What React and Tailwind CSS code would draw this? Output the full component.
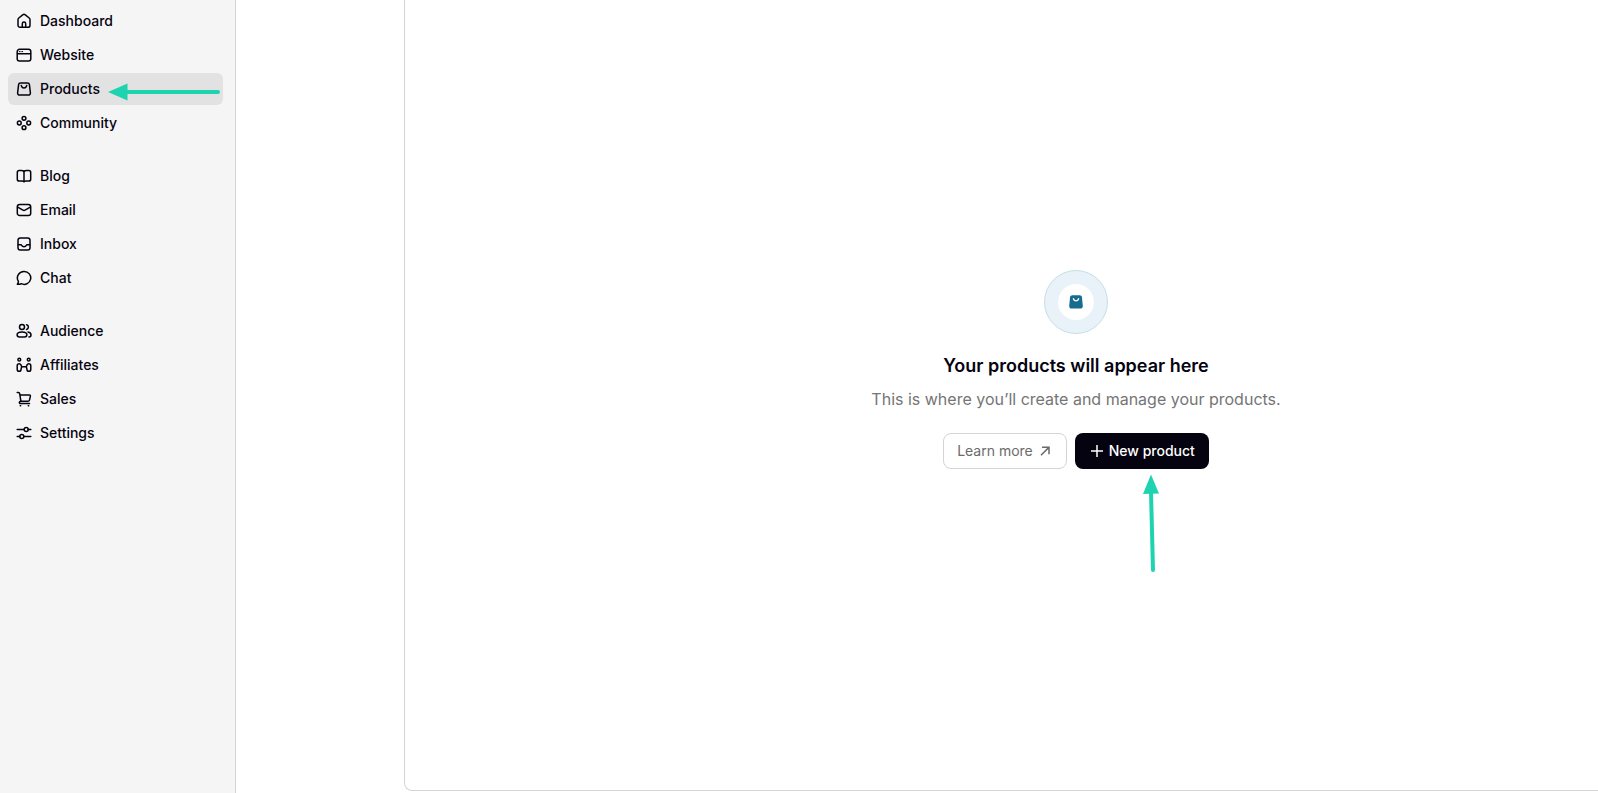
const NAV_GROUPS = [
  [
    {
      label: "Dashboard",
      icon: (
        <>
          <path d="M2 6.7c0-.7.3-1.3.8-1.700L6.700 1.800c.8-.6 1.800-.6 2.600 0L13.200 5c.5.4.8 1 .8 1.700v5.500c0 1.200-.9 2.100-2.100 2.100H4.100C2.900 14.300 2 13.400 2 12.200z" />
          <path d="M6.300 14v-3.300a1.700 1.700 0 0 1 3.400 0V14" />
        </>
      ),
    },
    {
      label: "Website",
      icon: (
        <>
          <rect x="1.2" y="2.3" width="13.6" height="11.7" rx="2.3" />
          <path d="M1.500 6.800h13" />
          <path d="M3.300 4.600h.9M5.800 4.600h.9" strokeWidth="1" />
        </>
      ),
    },
    {
      label: "Products",
      current: true,
      icon: (
        <>
          <path d="M4.500 1.900h7c1 0 1.800.7 1.900 1.700l1 8.300c.1 1.200-.8 2.200-2 2.200H3.600c-1.200 0-2.100-1-2-2.200l1-8.300c.1-1 .9-1.700 1.900-1.700z" />
          <path d="M5.300 4.600C5.700 6.200 6.700 7 8 7s2.300-.8 2.700-2.400" />
        </>
      ),
    },
    {
      label: "Community",
      icon: (
        <>
          <circle cx="8" cy="3.3" r="1.9" />
          <circle cx="8" cy="12.7" r="1.9" />
          <circle cx="3.3" cy="8" r="1.9" />
          <circle cx="12.7" cy="8" r="1.9" />
        </>
      ),
    },
  ],
  [
    {
      label: "Blog",
      icon: (
        <>
          <path d="M8 3.600C7.400 2.900 6.500 2.500 5.400 2.500H3.200c-1 0-1.900.8-1.900 1.900v6.800c0 1.100.9 1.900 1.900 1.900h3c.8 0 1.400.3 1.800.7.4-.4 1-.7 1.800-.7h3c1 0 1.900-.8 1.900-1.900V4.400c0-1.100-.9-1.900-1.900-1.900h-2.200c-1.100 0-2 .4-2.600 1.100z" />
          <path d="M8 3.600v10" />
        </>
      ),
    },
    {
      label: "Email",
      icon: (
        <>
          <rect x="1.3" y="2.5" width="13.4" height="11" rx="2.3" />
          <path d="M1.700 5.200 7 8.100c.6.4 1.400.4 2 0l5.300-2.900" />
        </>
      ),
    },
    {
      label: "Inbox",
      icon: (
        <>
          <rect x="2" y="2" width="12" height="12" rx="2.3" />
          <path d="M2.200 8.800h2.600c.5 0 .8.3 1 .7.3.8 1 1.300 2.200 1.300s1.900-.5 2.200-1.300c.2-.4.5-.7 1-.7h2.600" />
        </>
      ),
    },
    {
      label: "Chat",
      icon: <path d="M8.200 1.400a6.500 6.500 0 1 1-2.900 12.300c-1.100.5-2.500.7-4 .6.8-.8 1.200-2 1-3.100A6.500 6.500 0 0 1 8.200 1.400z" />,
    },
  ],
  [
    {
      label: "Audience",
      icon: (
        <>
          <circle cx="6" cy="4.1" r="2.500" />
          <path d="M6 8.900c2.900 0 4.900 1.300 4.900 2.900 0 1.300-1 2.100-2.400 2.100h-5c-1.400 0-2.400-.8-2.400-2.100 0-1.600 2-2.900 4.900-2.900z" />
          <path d="M10.600 1.700a2.500 2.500 0 0 1 0 4.800M12 9c1.800.4 3 1.500 3 2.900 0 1.200-.8 2-2.100 2" />
        </>
      ),
    },
    {
      label: "Affiliates",
      icon: (
        <>
          <circle cx="3.300" cy="2.700" r="1.400" />
          <circle cx="12.700" cy="2.700" r="1.400" />
          <path d="M5.700 9.700 4.900 7.900c-.3-.7-.9-1.100-1.600-1.100-1.200 0-2.100.9-2.100 2v3.400c0 1.200.8 2.100 1.900 2.100s1.900-.8 1.900-1.900z" />
          <path d="m10.300 9.700.8-1.800c.3-.7.9-1.100 1.600-1.100 1.200 0 2.100.9 2.100 2v3.400c0 1.200-.8 2.100-1.900 2.100s-1.900-.8-1.900-1.900z" />
          <path d="M5.700 9.700h4.600" />
        </>
      ),
    },
    {
      label: "Sales",
      icon: (
        <>
          <path d="M1.200 1.400h1.100c.7 0 1.300.5 1.400 1.200l1.200 7.700H12c.7 0 1.300-.5 1.500-1.200l.9-4c.1-.6-.3-1.100-.9-1.100H4" />
          <path d="M4.900 10.300c-2 0-2.100 2.300-.4 2.300h9" />
          <path d="M4.300 14.700h.4M12.300 14.700h.4" />
        </>
      ),
    },
    {
      label: "Settings",
      icon: (
        <>
          <circle cx="10.2" cy="4.6" r="2" />
          <circle cx="5.8" cy="11.4" r="2" />
          <path d="M1.200 4.600h7M12.200 4.600h2.600M1.200 11.400h2.600M7.800 11.400h7" />
        </>
      ),
    },
  ],
]

const NavIcon = ({ children }) => (
  <svg
    className="h-4 w-4 shrink-0"
    viewBox="0 0 16 16"
    fill="none"
    stroke="currentColor"
    strokeWidth="1.5"
    strokeLinecap="round"
    strokeLinejoin="round"
    aria-hidden
  >
    {children}
  </svg>
)

const Sidebar = () => (
  <nav className="flex w-[236px] shrink-0 flex-col gap-[21px] border-r border-[#d4d4d4] bg-[#f5f5f5] py-[5px] pr-3 pl-2">
    {NAV_GROUPS.map((group) => (
      <ul key={group[0].label} className="flex flex-col gap-0.5">
        {group.map(({ label, icon, current }) => (
          <li key={label} className="relative">
            <a
              href="#"
              aria-current={current ? "page" : undefined}
              className={[
                "flex h-8 items-center gap-2 rounded-md px-2 text-sm font-medium text-[#05030f]",
                current ? "bg-[#e2e2e2]" : "hover:bg-[#ebebeb]",
              ].join(" ")}
            >
              <NavIcon>{icon}</NavIcon>
              {label}
            </a>
            {/* pointer to the current section */}
            {current && (
              <svg
                className="pointer-events-none absolute top-2 right-0 h-5 w-[116px]"
                viewBox="0 0 116 20"
                aria-hidden
              >
                <path d="M1 11 20.500 2.500v17z" fill="#1dd3b0" />
                <path d="M18 11h93" stroke="#1dd3b0" strokeWidth="4" strokeLinecap="round" />
              </svg>
            )}
          </li>
        ))}
      </ul>
    ))}
  </nav>
)

const EmptyState = () => (
  <div className="flex flex-col items-center text-center">
    <div className="grid h-16 w-16 place-items-center rounded-full border border-[#c3dfe9] bg-[#e9f2f8]">
      <div className="grid h-9 w-9 place-items-center rounded-full bg-white">
        <svg className="h-4 w-4" viewBox="0 0 16 16" aria-hidden>
          <path
            d="M4.400 1.200h7.200c1.300 0 2.300.9 2.400 2.200l.8 8.500c.1 1.500-1 2.700-2.500 2.700H3.700c-1.500 0-2.600-1.200-2.500-2.700L2 3.400c.1-1.300 1.100-2.200 2.400-2.200z"
            fill="#166b8f"
          />
          <path
            d="M5.400 4.700c.4 1.400 1.300 2.100 2.600 2.100s2.200-.7 2.600-2.100"
            fill="none"
            stroke="#fff"
            strokeWidth="1.3"
            strokeLinecap="round"
          />
        </svg>
      </div>
    </div>

    <h1 className="mt-[18px] text-lg leading-7 font-semibold text-[#05030f]">
      Your products will appear here
    </h1>
    <p className="mt-[7px] text-base leading-6 text-[#757575]">
      This is where you’ll create and manage your products.
    </p>

    <div className="mt-[22px] flex gap-2">
      <a
        href="#"
        className="flex h-9 items-center gap-1 rounded-lg border border-[#d4d4d4] px-[13px] text-sm text-[#6b6b6b]"
      >
        Learn more
        <svg className="h-4 w-4" viewBox="0 0 16 16" fill="none" stroke="currentColor" strokeWidth="1.5" aria-hidden>
          <path d="m4 12.200 7.600-7.600M5 4.200h7v7" />
        </svg>
      </a>
      <div className="relative">
        <button
          type="button"
          className="flex h-9 items-center gap-1 rounded-lg bg-[#05030f] px-[14px] text-sm font-medium text-white"
        >
          <svg className="h-4 w-4" viewBox="0 0 16 16" fill="none" stroke="currentColor" strokeWidth="1.5" aria-hidden>
            <path d="M8 2v12M2 8h12" />
          </svg>
          New product
        </button>
        {/* pointer to the create action */}
        <svg
          className="pointer-events-none absolute top-10 left-[66px] h-[100px] w-5"
          viewBox="0 0 20 100"
          aria-hidden
        >
          <path d="M10 1.500 18 20.500 2 21z" fill="#1dd3b0" />
          <path d="m10 19 2 78" stroke="#1dd3b0" strokeWidth="4" strokeLinecap="round" />
        </svg>
      </div>
    </div>
  </div>
)

const App = () => (
  <div className="flex min-h-screen overflow-hidden bg-white font-['Inter',sans-serif]">
    <Sidebar />
    {/* the panel runs past the top and right edges of the view */}
    <main className="-mt-[52px] -mr-[149px] mb-0.5 ml-[168px] flex flex-1 items-center justify-center rounded-bl-lg border-b border-l border-[#d4d4d4]">
      <EmptyState />
    </main>
  </div>
)

export default App
